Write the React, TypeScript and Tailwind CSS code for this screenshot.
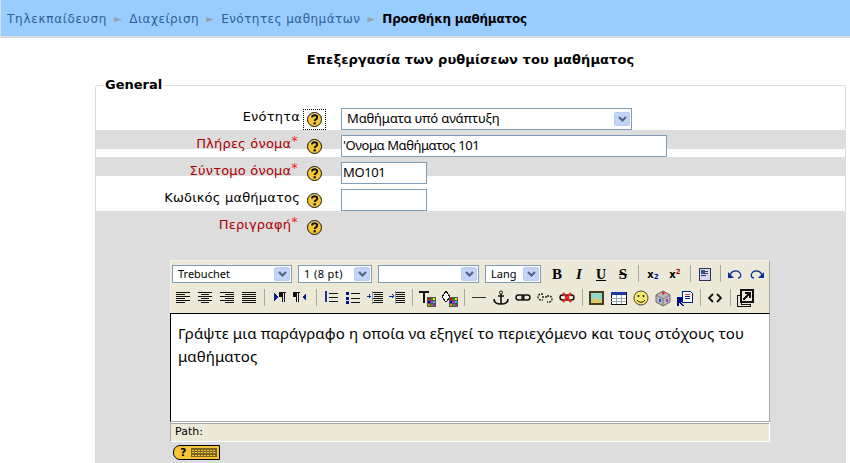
import React from "react";

const Help = ({ focus }: { focus?: boolean }) => (
  <span className={`flex h-[19px] w-[21px] items-center justify-center ${focus ? "outline-1 outline-dotted outline-black" : ""}`}>
    <svg width="15" height="15" viewBox="0 0 15 15">
      <circle cx="7.5" cy="7.5" r="7" fill="#f6c636" stroke="#111" />
      <path d="M3 6a5 5 0 0 1 8-3" stroke="#fde9a0" fill="none" />
      <path d="M5 5.5c0-3 5.200-3 5.200 0 0 2-2.500 1.800-2.500 3.500" stroke="#111" strokeWidth="1.900" fill="none" />
      <rect x="6.600" y="10.200" width="2.200" height="2.200" fill="#111" />
    </svg>
  </span>
);

const Row = ({ label, req, band, focus, children }: { label: string; req?: boolean; band?: boolean; focus?: boolean; children?: React.ReactNode }) => (
  <div className={`flex h-[27px] pt-[5px] ${band ? "bg-[linear-gradient(#dddddd_19px,transparent_19px)]" : ""}`}>
    <div className={`w-[204px] text-right text-[13px] leading-[18px] tracking-[0.2px] whitespace-nowrap ${req ? "text-[#aa0000]" : "text-black"}`}>
      {label}
      {req && <span className="relative -top-[3px] mr-[2px] text-[#ee2222]">*</span>}
    </div>
    <div className="ml-[4px] mt-[2px] w-[21px]">
      <Help focus={focus} />
    </div>
    <div className="ml-[16px]">{children}</div>
  </div>
);

const Sel = ({ w, text, tiny, sp }: { w: string; text: string; tiny?: boolean; sp?: string }) => (
  <div className={`flex items-center justify-between border border-[#7f9db9] bg-white ${w} ${tiny ? "h-[18px] text-[11px] pl-[5px] pr-[1px]" : "h-[22px] text-[13px] pl-[5px] pr-[1px] tracking-[-0.15px]"} font-['Noto_Sans',sans-serif]`}>
    <span className={`whitespace-nowrap ${sp ?? ""}`}>{text}</span>
    <span className="flex h-[14px] w-[16px] items-center justify-center rounded-[2px] border border-[#b8cdf0] bg-[#c3d4f7]">
      <svg width="9" height="6" viewBox="0 0 9 6"><path d="M1 1l3.500 3.500L8 1" stroke="#4d6185" strokeWidth="2" fill="none" /></svg>
    </span>
  </div>
);

const B = ({ children }: { children: React.ReactNode }) => (
  <span className="flex h-[18px] w-[22px] items-center justify-center font-['Liberation_Serif',serif]">{children}</span>
);
const Sep = () => (
  <span className="flex h-[18px] w-[8px] justify-center"><span className="h-[17px] w-[1px] bg-[#a8a79e]" /></span>
);
const I = ({ children }: { children: React.ReactNode }) => (
  <svg width="18" height="18" viewBox="0 0 18 18" shapeRendering="crispEdges">{children}</svg>
);
const Lines = ({ rows }: { rows: [number, number, number][] }) => (
  <I><path stroke="#111" d={rows.map(([x, w, y]) => `M${x} ${y}h${w}`).join("")} /></I>
);
const Palette = () => (
  <>
    <rect x="9" y="8" width="9" height="10" fill="#555" />
    <rect x="10" y="9" width="2" height="2" fill="#e00" /><rect x="13" y="9" width="2" height="2" fill="#0a0" /><rect x="15" y="9" width="2" height="2" fill="#ee0" />
    <rect x="10" y="12" width="2" height="2" fill="#00c" /><rect x="13" y="12" width="2" height="2" fill="#f0f" /><rect x="15" y="12" width="2" height="2" fill="#0cc" />
    <rect x="10" y="15" width="2" height="2" fill="#f80" /><rect x="13" y="15" width="2" height="2" fill="#0c0" /><rect x="15" y="15" width="2" height="2" fill="#d0d" />
  </>
);
const Arrow = () => <span className="w-[22px] text-center text-[10px] text-[#9a9faa]">►</span>;

export default function App() {
  return (
    <div className="h-[463px] w-[850px] overflow-hidden bg-white font-['DejaVu_Sans',sans-serif] text-black">
      <div className="flex h-[38px] items-center whitespace-nowrap border-b-[2px] border-l border-[#dddddd] bg-[#99ccff] pl-[6px] pt-[1px] text-[12px] font-normal text-[#2f6196]">
        <span className="tracking-[0.72px]">Τηλεκπαίδευση</span>
        <Arrow />
        <span className="tracking-[0.55px]">Διαχείριση</span>
        <Arrow />
        <span className="tracking-[0.45px]">Ενότητες μαθημάτων</span>
        <Arrow />
        <span className="font-bold tracking-[-0.2px] text-black">Προσθήκη μαθήματος</span>
      </div>
      <div className="pl-[95px] pr-[4px]">
        <div className="mt-[13px] h-[20px] text-center text-[13px] font-bold leading-[17px] tracking-[0.08px]">
          Επεξεργασία των ρυθμίσεων του μαθήματος
        </div>
        <fieldset className="mt-[6px] rounded-tl-[3px] border border-[#dddddd] pb-[40px]">
          <legend className="ml-[8px] px-[1px] text-[13px] font-bold leading-[16px]">General</legend>
          <div className="mt-[10px]">
            <Row label="Ενότητα" focus>
              <Sel w="w-[291px]" text="Μαθήματα υπό ανάπτυξη" />
            </Row>
            <Row label="Πλήρες όνομα" req band>
              <div className="flex h-[22px] w-[326px] items-center border border-[#7f9db9] bg-white pl-[1px] font-['Noto_Sans',sans-serif] text-[13px] tracking-[-0.4px]">'Ονομα Μαθήματος 101</div>
            </Row>
            <Row label="Σύντομο όνομα" req band>
              <div className="flex h-[22px] w-[86px] items-center border border-[#7f9db9] bg-white pl-[1px] font-['Noto_Sans',sans-serif] text-[13px] tracking-[-0.4px]">MO101</div>
            </Row>
            <Row label="Κωδικός μαθήματος">
              <div className="h-[22px] w-[86px] border border-[#7f9db9] bg-white" />
            </Row>
            <div className="h-[260px] bg-[#dddddd]">
              <div className="flex h-[27px] pt-[5px]">
                <div className="w-[204px] whitespace-nowrap text-right text-[13px] leading-[18px] tracking-[0.2px] text-[#aa0000]">
                  Περιγραφή<span className="relative -top-[3px] mr-[2px] text-[#ee2222]">*</span>
                </div>
                <div className="ml-[4px] mt-[2px] w-[21px]"><Help /></div>
              </div>
              <div className="ml-[74px] mt-[22px] w-[600px]">
                <div className="h-[53px] border-r border-t border-l border-r-[#a8a79e] border-t-[#f5f3ea] border-l-[#f5f3ea] bg-[#ece9d8] pl-[1px] pt-[3px]">
                  <div className="flex h-[20px] items-center">
                    <Sel tiny w="w-[120px]" text="Trebuchet" />
                    <div className="w-[6px]" />
                    <Sel tiny w="w-[74px]" text="1 (8 pt)" sp="tracking-[0.4px]" />
                    <div className="w-[6px]" />
                    <Sel tiny w="w-[101px]" text="" />
                    <div className="w-[6px]" />
                    <Sel tiny w="w-[56px]" text="Lang" />
                    <div className="w-[5px]" />
                    <B><span className="text-[15px] font-bold">B</span></B>
                    <B><span className="text-[15px] font-bold italic">I</span></B>
                    <B><span className="text-[14px] font-bold underline">U</span></B>
                    <B><span className="text-[15px] font-bold line-through">S</span></B>
                    <Sep />
                    <B><span className="font-['DejaVu_Sans',sans-serif] text-[10px] font-bold">x<sub className="text-[7px] text-[#00a]">2</sub></span></B>
                    <B><span className="font-['DejaVu_Sans',sans-serif] text-[10px] font-bold">x<sup className="text-[7px] text-[#a00]">2</sup></span></B>
                    <Sep />
                    <B><I><rect x="3" y="3" width="11" height="12" fill="#d8d8ee" stroke="#335" /><path d="M5 6h7M5 8h7M5 10h5" stroke="#335" /><rect x="5" y="5" width="4" height="4" fill="#33558c" /></I></B>
                    <Sep />
                    <B><svg width="16" height="12" viewBox="0 0 16 12"><path d="M1 4v6h6z" fill="#0b2f9c" /><path d="M3 7c2-5 8-5 10-2s0 5-2 5" stroke="#0b2f9c" strokeWidth="1.300" fill="none" /></svg></B>
                    <B><svg width="16" height="12" viewBox="0 0 16 12"><path d="M15 4v6H9z" fill="#0b2f9c" /><path d="M13 7C11 2 5 2 3 5s0 5 2 5" stroke="#0b2f9c" strokeWidth="1.300" fill="none" /></svg></B>
                  </div>
                  <div className="mt-[4px] flex h-[20px] items-center">
                    <B><Lines rows={[[2, 14, 3], [2, 9, 5], [2, 14, 7], [2, 9, 9], [2, 14, 11], [2, 9, 13]]} /></B>
                    <B><Lines rows={[[2, 14, 3], [5, 8, 5], [2, 14, 7], [5, 8, 9], [2, 14, 11], [5, 8, 13]]} /></B>
                    <B><Lines rows={[[2, 14, 3], [7, 9, 5], [2, 14, 7], [7, 9, 9], [2, 14, 11], [7, 9, 13]]} /></B>
                    <B><Lines rows={[[2, 14, 3], [2, 14, 5], [2, 14, 7], [2, 14, 9], [2, 14, 11], [2, 14, 13]]} /></B>
                    <Sep />
                    <B><I><path d="M4 4v8l4-4z" fill="#002288" /><path d="M10 3h6M12 3v10M14 3v10" stroke="#111" /><rect x="9" y="3" width="4" height="5" fill="#111" /></I></B>
                    <B><I><path d="M14 4v8l-4-4z" fill="#002288" /><path d="M2 3h6M4 3v10M6 3v10" stroke="#111" /><rect x="1" y="3" width="4" height="5" fill="#111" /></I></B>
                    <Sep />
                    <B><I><path d="M3 2h2v11H3z" fill="#1a2fa0" /><path d="M7 4h9M7 8h9M7 12h9" stroke="#111" /></I></B>
                    <B><I><path d="M2 3h3v3H2zM2 7.500h3v3H2zM2 12h3v3H2z" fill="#000f90" /><path d="M7 4h9M7 9h9M7 13h9" stroke="#111" /></I></B>
                    <B><I><path d="M1 7h4M3 5v4" stroke="#0033aa" /><path d="M7 3h10M8 5h9M8 7h9M7 9h10M8 11h9M7 13h10" stroke="#111" /><path d="M6 2v13" stroke="#999" /></I></B>
                    <B><I><path d="M1 7h5M4 5l2 2-2 2" stroke="#0033aa" fill="none" /><path d="M7 3h10M8 5h9M8 7h9M7 9h10M8 11h9M7 13h10" stroke="#111" /><path d="M7 2v13" stroke="#999" /></I></B>
                    <Sep />
                    <B><I><path d="M1 2h10v2H7v10H5V4H1z" fill="#111" /><Palette /></I></B>
                    <B><I><path d="M2 8l4-6 4 6-4 5z" fill="#fff" stroke="#111" /><Palette /></I></B>
                    <Sep />
                    <B><I><rect x="2" y="8" width="14" height="1" fill="#333" /></I></B>
                    <B><svg width="18" height="18" viewBox="0 0 18 18"><circle cx="9" cy="3.500" r="1.500" fill="none" stroke="#111" /><path d="M9 5v10M6 7h6M2 10c0 4 4 5 7 5s7-1 7-5" stroke="#111" strokeWidth="1.600" fill="none" /></svg></B>
                    <B><svg width="18" height="18" viewBox="0 0 18 18"><rect x="2" y="6" width="8" height="5" rx="2.500" fill="none" stroke="#111" strokeWidth="1.400" /><rect x="8" y="6" width="8" height="5" rx="2.500" fill="none" stroke="#111" strokeWidth="1.400" /></svg></B>
                    <B><svg width="18" height="18" viewBox="0 0 18 18"><path d="M7 5H5a3 3 0 0 0 0 6h2M11 7h2a3 3 0 0 1 0 6h-2M6 8h6" fill="none" stroke="#222" strokeWidth="1.300" strokeDasharray="2 1" /></svg></B>
                    <B><svg width="18" height="18" viewBox="0 0 18 18"><rect x="2" y="6" width="8" height="5" rx="2.500" fill="none" stroke="#111" strokeWidth="1.400" /><rect x="8" y="6" width="8" height="5" rx="2.500" fill="none" stroke="#111" strokeWidth="1.400" /><path d="M5 4l8 9M13 4l-8 9" stroke="#ee2222" strokeWidth="2" /></svg></B>
                    <Sep />
                    <B><I><rect x="1" y="2" width="15" height="14" fill="#4a3b1c" /><rect x="3" y="4" width="11" height="10" fill="#8fd8d0" /><path d="M3 14l4-6 3 3 2-2 2 5z" fill="#e8c860" /></I></B>
                    <B><I><rect x="1" y="3" width="15" height="12" fill="#fff" stroke="#111" /><rect x="1" y="3" width="15" height="3" fill="#1a3a9c" /><path d="M1 9h15M1 12h15M6 6v9M11 6v9" stroke="#9aa" /></I></B>
                    <B><svg width="18" height="18" viewBox="0 0 18 18"><circle cx="9" cy="9" r="7" fill="#f5e96a" stroke="#443" /><circle cx="6.500" cy="7" r="1" fill="#111" /><circle cx="11.500" cy="7" r="1" fill="#111" /><path d="M5 11c2 3 6 3 8 0" stroke="#111" fill="none" /></svg></B>
                    <B><svg width="18" height="18" viewBox="0 0 18 18"><path d="M2 6l7-4 7 4v7l-7 4-7-4z" fill="#bdb9bd" stroke="#666" /><path d="M2 6l7 4 7-4M9 10v7" stroke="#777" fill="none" /><rect x="8" y="3" width="2.500" height="2.500" fill="#e22" /><rect x="5" y="10" width="2" height="3" fill="#25c" /><rect x="12" y="10" width="2" height="3" fill="#a3a" /></svg></B>
                    <B><I><path d="M6 2h8l2 2v9H6z" fill="#fff" stroke="#002288" /><path d="M9 5h5" stroke="#e33" /><path d="M9 7h5M9 9h5" stroke="#002288" /><path d="M1 8h4a2.500 2.500 0 0 1 0 5l3 4H6l-3-4v4H1z" fill="#000f80" /></I></B>
                    <Sep />
                    <B><svg width="14" height="12" viewBox="0 0 14 12"><path d="M5 2L1 6l4 4M9 2l4 4-4 4" fill="none" stroke="#111" strokeWidth="1.800" /></svg></B>
                    <Sep />
                    <B><I><rect x="5" y="1" width="12" height="12" fill="none" stroke="#111" strokeWidth="1.500" /><path d="M1 6h4v9h9v2H1z" fill="none" stroke="#111" /><path d="M7 11l6-6M9 4h5v5" stroke="#111" strokeWidth="1.500" fill="none" /></I></B>
                  </div>
                </div>
                <div className="h-[109px] border border-t-black border-l-black border-r-[#aaaaaa] border-b-[#aaaaaa] bg-white pl-[7px] pr-[10px] pt-[8px] font-['Noto_Sans',sans-serif] text-[15px] leading-[23px] tracking-[0.12px]">
                  Γράψτε μια παράγραφο η οποία να εξηγεί το περιεχόμενο και τους στόχους του μαθήματος
                </div>
                <div className="h-[20px] border border-white border-l-[#a8a79e]">
                  <div className="flex h-[18px] items-center border-t border-[#a8a79e] bg-[#ece9d8] pl-[4px] text-[11px]">Path:</div>
                </div>
              </div>
              <div className="ml-[77px] mt-[3px] flex h-[15px] w-[47px] items-center rounded-l-[7px] border border-black bg-[#f6c636]">
                <span className="ml-[6px] text-[11px] font-bold leading-none">?</span>
                <svg className="ml-[5px]" width="27" height="11" viewBox="0 0 27 11" shapeRendering="crispEdges">
                  <rect x="0" y="1" width="26" height="9" fill="#7a6420" />
                  <path d="M1 3h24M1 5.500h24M1 8h24" stroke="#f6c636" strokeDasharray="2 1" />
                </svg>
              </div>
            </div>
          </div>
        </fieldset>
      </div>
    </div>
  );
}
